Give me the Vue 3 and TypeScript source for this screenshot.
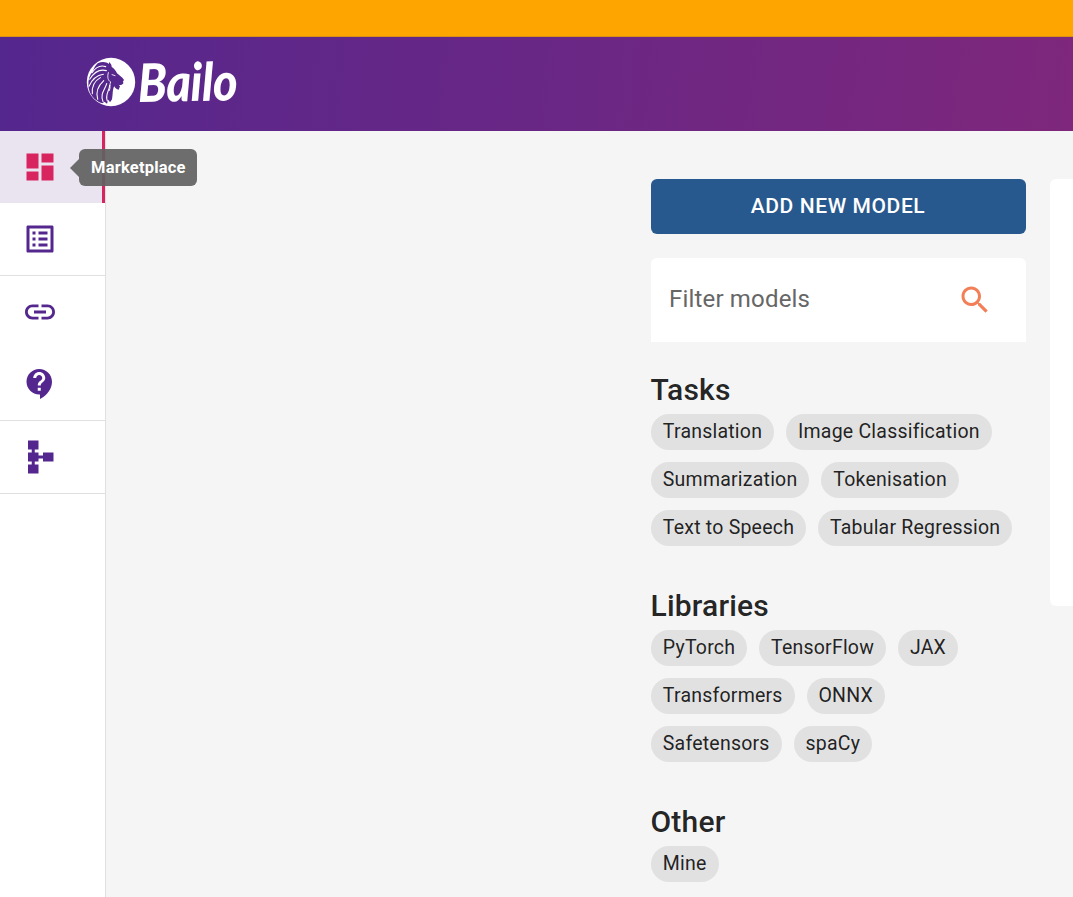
<script setup lang="ts">
interface NavItem {
  label: string
  path: string
  active?: boolean
}

interface FilterGroup {
  title: string
  chips: string[]
}

const navGroups: NavItem[][] = [
  [
    {
      label: 'Marketplace',
      path: 'M3 13h8V3H3v10zm0 8h8v-6H3v6zm10 0h8V11h-8v10zm0-18v6h8V3h-8z',
      active: true,
    },
    {
      label: 'Review',
      path: 'M19 5v14H5V5h14m1.1-2H3.9c-.5 0-.9.4-.9.9v16.2c0 .4.4.9.9.9h16.2c.4 0 .9-.5.9-.9V3.9c0-.5-.5-.9-.9-.9zM11 7h6v2h-6V7zm0 4h6v2h-6v-2zm0 4h6v2h-6zM7 7h2v2H7zm0 4h2v2H7zm0 4h2v2H7z',
    },
  ],
  [
    {
      label: 'API',
      path: 'M3.9 12c0-1.71 1.39-3.1 3.1-3.1h4V7H7c-2.76 0-5 2.24-5 5s2.24 5 5 5h4v-1.9H7c-1.71 0-3.1-1.39-3.1-3.1zM8 13h8v-2H8v2zm9-6h-4v1.9h4c1.71 0 3.1 1.39 3.1 3.1s-1.39 3.1-3.1 3.1h-4V17h4c2.76 0 5-2.24 5-5s-2.24-5-5-5z',
    },
    {
      label: 'Help & Support',
      path: 'M11.5 2C6.81 2 3 5.81 3 10.5S6.81 19 11.5 19h.5v3c4.86-2.34 8-7 8-11.5C20 5.81 16.19 2 11.5 2zm1 14.5h-2v-2h2v2zm0-3.5h-2c0-3.25 3-3 3-5 0-1.1-.9-2-2-2s-2 .9-2 2h-2c0-2.21 1.79-4 4-4s4 1.79 4 4c0 2.5-3 2.75-3 5z',
    },
  ],
  [
    {
      label: 'Schemas',
      path: 'M14 9v2h-3V9H8.5V7H11V1H4v6h2.5v2H4v6h2.5v2H4v6h7v-6H8.5v-2H11v-2h3v2h7V9h-7z',
    },
  ],
]

const filters: FilterGroup[] = [
  {
    title: 'Tasks',
    chips: ['Translation', 'Image Classification', 'Summarization', 'Tokenisation', 'Text to Speech', 'Tabular Regression'],
  },
  {
    title: 'Libraries',
    chips: ['PyTorch', 'TensorFlow', 'JAX', 'Transformers', 'ONNX', 'Safetensors', 'spaCy'],
  },
  { title: 'Other', chips: ['Mine'] },
]
</script>

<template>
  <div class="page">
    <div class="banner"></div>
    <header class="topbar">
      <svg class="logo" viewBox="0 0 54 56">
        <circle cx="27" cy="28" r="24.2" fill="#fff" />
        <g transform="translate(-14.3 -23.7) scale(.3333)">
          <path
            class="ink"
            d="M84 99C96 93 110 94 117 101L119 95C124 101 126 105 126 110C132 113 138 120 142 129L158 142L163 149L160 153L161 159C158 164 151 166 147 163L151 168L147 178C141 177 136 173 134 168C128 176 130 192 127 207L121 216L116 208L112 220L104 214L98 219C73 211 57 191 56 164C55 149 60 133 70 122C73 113 77 106 84 99Z"
          />
          <path
            class="strand"
            d="M67 127C79 110 94 104 108 109M60 147C73 126 91 116 110 121M58 168C68 145 80 135 101 132M68 190C66 169 76 151 92 142M84 207C76 181 88 164 102 151M100 214C90 191 106 177 111 160M113 212C105 193 119 182 120 165"
          />
          <path class="strand fine" d="M116 127C112 141 115 151 123 155C118 163 124 171 119 181M127 133L136 136" />
        </g>
      </svg>
      <span class="wordmark">Bailo</span>
    </header>

    <div class="body">
      <nav class="drawer">
        <ul v-for="(group, i) in navGroups" :key="i" class="nav-group">
          <li v-for="item in group" :key="item.label" class="nav-item" :class="{ active: item.active }" :aria-label="item.label">
            <svg class="icon" viewBox="0 0 24 24"><path :d="item.path" /></svg>
            <div v-if="item.active" class="tooltip">{{ item.label }}</div>
          </li>
        </ul>
      </nav>

      <main class="content">
        <aside class="sidebar">
          <button class="add" type="button">Add new model</button>
          <div class="search">
            <span>Filter models</span>
            <svg class="icon" viewBox="0 0 24 24">
              <path
                d="M15.5 14h-.79l-.28-.27C15.41 12.59 16 11.11 16 9.5 16 5.91 13.09 3 9.5 3S3 5.91 3 9.5 5.91 16 9.5 16c1.61 0 3.09-.59 4.23-1.57l.27.28v.79l5 4.99L20.49 19l-4.99-5zm-6 0C7.01 14 5 11.99 5 9.5S7.01 5 9.5 5 14 7.01 14 9.5 11.99 14 9.5 14z"
              />
            </svg>
          </div>
          <section v-for="group in filters" :key="group.title" class="group">
            <h2>{{ group.title }}</h2>
            <div class="chips">
              <span v-for="chip in group.chips" :key="chip" class="chip">{{ chip }}</span>
            </div>
          </section>
        </aside>
        <div class="results"></div>
      </main>
    </div>
  </div>
</template>

<style>
body {
  margin: 0;
  overflow: hidden;
}
</style>

<style scoped>
.page {
  box-sizing: border-box;
  height: 897px;
  display: flex;
  flex-direction: column;
  overflow: hidden;
  background: #f5f5f5;
  font-family: Roboto, 'Liberation Sans', sans-serif;
  color: rgba(0, 0, 0, 0.87);
}
.banner {
  flex: none;
  box-sizing: border-box;
  height: 37px;
  background: #ffa500;
  border-bottom: 1px solid #d99014;
}
.topbar {
  flex: none;
  display: flex;
  align-items: flex-start;
  height: 94px;
  box-sizing: border-box;
  padding: 17px 0 0 84px;
  background: linear-gradient(96deg, #54278e 0, #7e277c 1073px);
}
.logo {
  flex: none;
  display: block;
  width: 54px;
  height: 56px;
}
.ink {
  fill: #56278d;
}
.strand {
  fill: none;
  stroke: #fff;
  stroke-width: 3.3;
  stroke-linecap: round;
}
.fine {
  stroke-width: 2.6;
}
.wordmark {
  padding-right: 4px;
  font: italic 900 53px/60px Lato, sans-serif;
  letter-spacing: -0.5px;
  color: #fff;
  transform: translateY(-2px) rotate(-1deg) scaleX(0.885);
  transform-origin: 0 50%;
}
.body {
  flex: 1;
  min-height: 0;
  display: flex;
}
.drawer {
  flex: none;
  width: 105px;
  background: #fff;
  border-right: 1px solid #e0e0e0;
}
.nav-group {
  list-style: none;
  margin: 0;
  padding: 0;
  border-bottom: 1px solid #e0e0e0;
}
.nav-item {
  position: relative;
  box-sizing: border-box;
  height: 72px;
  padding-left: 22px;
  display: flex;
  align-items: center;
  color: #54278e;
}
.nav-item.active {
  color: #d9255f;
  background: #eae4f1;
  border-right: 3px solid #d9255f;
}
.icon {
  width: 36px;
  height: 36px;
  fill: currentColor;
}
.tooltip {
  position: absolute;
  z-index: 1;
  left: 79px;
  top: 18px;
  height: 37px;
  padding: 0 11.5px 0 12px;
  border-radius: 6px;
  background: rgba(97, 97, 97, 0.92);
  color: #fff;
  font-size: 16.5px;
  font-weight: 700;
  line-height: 37px;
  letter-spacing: 0.2px;
}
.tooltip::before {
  content: '';
  position: absolute;
  left: -9px;
  top: 10px;
  border: 9px solid transparent;
  border-left-width: 0;
  border-right-color: rgba(97, 97, 97, 0.92);
}
.content {
  flex: 1;
  display: flex;
  align-items: flex-start;
  gap: 24px;
  padding: 48px 0 0 545px;
  overflow: hidden;
}
.sidebar {
  flex: none;
  width: 375px;
}
.add {
  display: block;
  width: 100%;
  height: 55px;
  padding: 0 1px 2px 0;
  border: 0;
  border-radius: 6px;
  background: #27598e;
  color: #fff;
  font: 500 21px/52px Roboto, sans-serif;
  letter-spacing: 0.6px;
  text-transform: uppercase;
}
.search {
  box-sizing: border-box;
  height: 84px;
  margin-top: 24px;
  padding: 0 33px 2px 18px;
  display: flex;
  align-items: center;
  justify-content: space-between;
  border-radius: 6px 6px 0 0;
  background: #fff;
  color: #666;
  font-size: 24px;
  letter-spacing: 0.18px;
}
.search .icon {
  margin-top: 2px;
  color: #f37f58;
}
.group {
  height: 216px;
}
.group:first-of-type {
  margin-top: 24px;
}
h2 {
  margin: 0;
  height: 48px;
  font-size: 30px;
  font-weight: 500;
  line-height: 47px;
  letter-spacing: 0.2px;
  text-indent: -0.5px;
}
.chips {
  display: flex;
  flex-wrap: wrap;
  gap: 12px;
}
.chip {
  height: 36px;
  padding: 0 12px 0 11.8px;
  border-radius: 18px;
  background: #e1e1e1;
  font-size: 19.5px;
  line-height: 35px;
  letter-spacing: 0.22px;
}
.results {
  flex: none;
  width: 600px;
  height: 427px;
  border-radius: 6px;
  background: #fff;
}
</style>
